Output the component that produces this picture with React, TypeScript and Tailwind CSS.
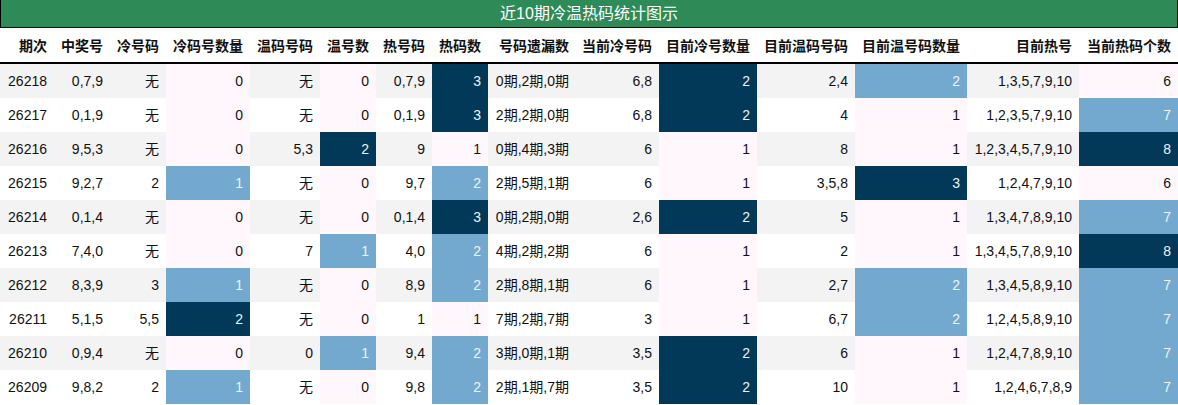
import React from "react";

type C = "p" | "b" | "n" | "";
type Cell = string | [string, C];

const widths = [
  "w-[54px]", "w-[56px]", "w-[56px]", "w-[84px]", "w-[70px]", "w-[56px]", "w-[56px]", "w-[56px]",
  "w-[88px]", "w-[83px]", "w-[98px]", "w-[98px]", "w-[112px]", "w-[112px]", "w-[99px]",
];

const headers = [
  "期次", "中奖号", "冷号码", "冷码号数量", "温码号码", "温号数", "热号码", "热码数",
  "号码遗漏数", "当前冷号码", "目前冷号数量", "目前温码号码", "目前温号码数量", "目前热号", "当前热码个数",
];

const rows: Cell[][] = [
  ["26218", "0,7,9", "无", ["0", "p"], "无", ["0", "p"], "0,7,9", ["3", "n"], "0期,2期,0期", "6,8", ["2", "n"], "2,4", ["2", "b"], "1,3,5,7,9,10", ["6", "p"]],
  ["26217", "0,1,9", "无", ["0", "p"], "无", ["0", "p"], "0,1,9", ["3", "n"], "2期,2期,0期", "6,8", ["2", "n"], "4", ["1", "p"], "1,2,3,5,7,9,10", ["7", "b"]],
  ["26216", "9,5,3", "无", ["0", "p"], "5,3", ["2", "n"], "9", ["1", "p"], "0期,4期,3期", "6", ["1", "p"], "8", ["1", "p"], "1,2,3,4,5,7,9,10", ["8", "n"]],
  ["26215", "9,2,7", "2", ["1", "b"], "无", ["0", "p"], "9,7", ["2", "b"], "2期,5期,1期", "6", ["1", "p"], "3,5,8", ["3", "n"], "1,2,4,7,9,10", ["6", "p"]],
  ["26214", "0,1,4", "无", ["0", "p"], "无", ["0", "p"], "0,1,4", ["3", "n"], "0期,2期,0期", "2,6", ["2", "n"], "5", ["1", "p"], "1,3,4,7,8,9,10", ["7", "b"]],
  ["26213", "7,4,0", "无", ["0", "p"], "7", ["1", "b"], "4,0", ["2", "b"], "4期,2期,2期", "6", ["1", "p"], "2", ["1", "p"], "1,3,4,5,7,8,9,10", ["8", "n"]],
  ["26212", "8,3,9", "3", ["1", "b"], "无", ["0", "p"], "8,9", ["2", "b"], "2期,8期,1期", "6", ["1", "p"], "2,7", ["2", "b"], "1,3,4,5,8,9,10", ["7", "b"]],
  ["26211", "5,1,5", "5,5", ["2", "n"], "无", ["0", "p"], "1", ["1", "p"], "7期,2期,7期", "3", ["1", "p"], "6,7", ["2", "b"], "1,2,4,5,8,9,10", ["7", "b"]],
  ["26210", "0,9,4", "无", ["0", "p"], "0", ["1", "b"], "9,4", ["2", "b"], "3期,0期,1期", "3,5", ["2", "n"], "6", ["1", "p"], "1,2,4,7,8,9,10", ["7", "b"]],
  ["26209", "9,8,2", "2", ["1", "b"], "无", ["0", "p"], "9,8", ["2", "b"], "2期,1期,7期", "3,5", ["2", "n"], "10", ["1", "p"], "1,2,4,6,7,8,9", ["7", "b"]],
];

const colorClass: Record<C, string> = {
  p: "bg-[#fff7fb] text-[#111]",
  b: "bg-[#74a9cf] text-[#f1f1f1]",
  n: "bg-[#023858] text-[#f1f1f1]",
  "": "",
};

export default function App() {
  return (
    <div className="w-[1178px] bg-white font-['Liberation_Sans','Noto_Sans_CJK_SC',sans-serif] text-[14px] text-[#111]">
      <div className="h-[28px] bg-[#2e8b57] border-x border-b border-black flex items-center justify-center text-white text-[16px] leading-none">
        近10期冷温热码统计图示
      </div>
      <div className="flex h-[36px] border-b-2 border-black">
        {headers.map((h, i) => (
          <div
            key={i}
            className={`${widths[i]} shrink-0 px-[7px] flex items-center justify-end font-bold whitespace-nowrap font-['Noto_Sans_CJK_SC',sans-serif] text-[14px] leading-none`}
          >
            {h}
          </div>
        ))}
      </div>
      {rows.map((r, ri) => (
        <div key={ri} className={`flex h-[34px] ${ri % 2 === 0 ? "bg-[#f3f3f3]" : "bg-white"}`}>
          {r.map((c, ci) => {
            const [t, col] = typeof c === "string" ? [c, "" as C] : c;
            return (
              <div
                key={ci}
                className={`${widths[ci]} shrink-0 px-[7px] flex items-center justify-end whitespace-nowrap leading-none ${colorClass[col]}`}
              >
                {t}
              </div>
            );
          })}
        </div>
      ))}
    </div>
  );
}
